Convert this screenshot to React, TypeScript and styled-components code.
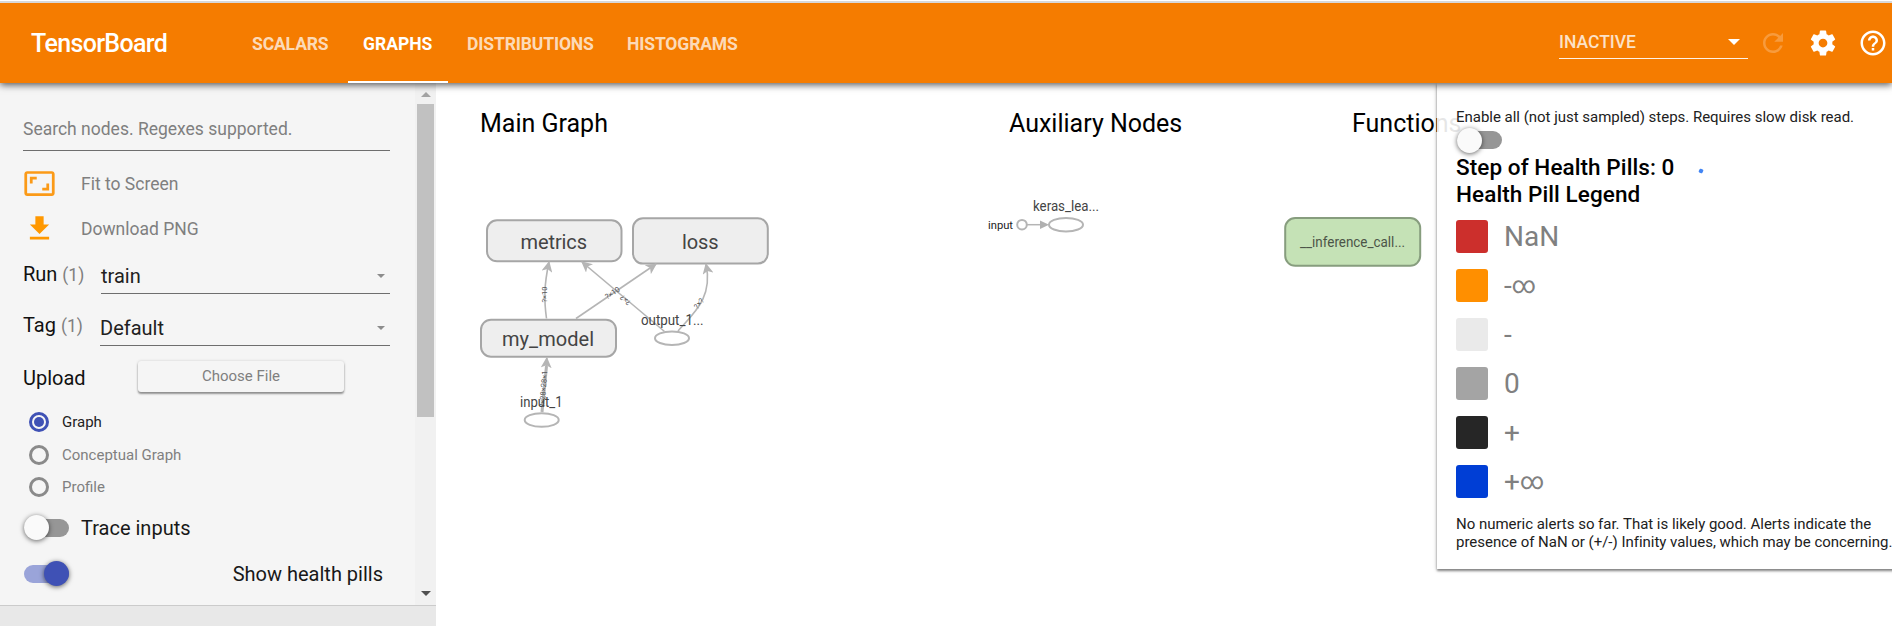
import React from "react";
import styled, { createGlobalStyle } from "styled-components";

const Global = createGlobalStyle`
  * { box-sizing: border-box; }
  body { margin: 0; background: #fff; font-family: Roboto, "Noto Sans", sans-serif; overflow: hidden; }
`;

const Page = styled.div`
  display: flex;
  flex-direction: column;
  width: 1892px;
  height: 626px;
  overflow: hidden;
`;

const Header = styled.header`
  display: flex;
  align-items: center;
  flex: none;
  height: 83px;
  padding-left: 31px;
  border-top: 3px solid #d8d8d8;
  background: #f57c00;
  color: #fff;
  position: relative;
  z-index: 3;
  box-shadow: 0 2px 7px rgba(0, 0, 0, 0.65);
  &::before {
    content: "";
    position: absolute;
    top: -3px;
    left: 0;
    right: 0;
    height: 1px;
    background: #fff;
  }
`;

const Brand = styled.div`
  width: 206px;
  padding-top: 1px;
  font-size: 25px;
  font-weight: 500;
  letter-spacing: -0.65px;
`;

const Tabs = styled.nav`
  display: flex;
  align-self: stretch;
  gap: 4px;
`;

const Tab = styled.div<{ $active?: boolean; $w: number }>`
  display: flex;
  align-items: center;
  width: ${(p) => p.$w}px;
  padding: 2px 0 0 15px;
  font-size: 17.5px;
  font-weight: 700;
  letter-spacing: ${(p) => (p.$active ? 0 : -0.12)}px;
  white-space: nowrap;
  color: ${(p) => (p.$active ? "#fff" : "rgba(255,255,255,.74)")};
  box-shadow: ${(p) => (p.$active ? "inset 0 -2px 0 #fff" : "none")};
`;

const HeaderTools = styled.div`
  display: flex;
  align-items: center;
  margin-left: auto;
  padding-right: 4px;
  gap: 20px;
`;

const Inactive = styled.div`
  display: flex;
  align-items: center;
  justify-content: space-between;
  width: 189px;
  height: 34px;
  margin: 0 -10px 2px 0;
  padding: 1px 8px 0 0;
  border-bottom: 1px solid rgba(255, 255, 255, 0.9);
  font-size: 17.5px;
  font-weight: 500;
  letter-spacing: 0;
  color: rgba(255, 255, 255, 0.78);
`;

const Main = styled.div`
  display: flex;
  flex: 1;
  min-height: 0;
`;

const Sidebar = styled.aside`
  display: flex;
  flex-direction: column;
  width: 436px;
  background: #f5f5f5;
`;

const SideBody = styled.div`
  display: flex;
  height: 522px;
`;

const Controls = styled.div`
  width: 415px;
  padding-left: 23px;
`;

const Footer = styled.div`
  flex: 1;
  border-top: 1px solid #cbcbcb;
  background: #e8e8e8;
`;

const Scrollbar = styled.div`
  display: flex;
  flex-direction: column;
  align-items: center;
  width: 21px;
  background: #f1f1f1;
`;

const Thumb = styled.div`
  width: 17px;
  height: 313px;
  margin: 7px 0 174px;
  background: #c1c1c1;
`;

const Caret = styled.i<{ $s: number; $c: string; $up?: boolean }>`
  width: 0;
  height: 0;
  flex: none;
  border: ${(p) => p.$s}px solid transparent;
  ${(p) => (p.$up ? `border-top-width: 0; border-bottom-color: ${p.$c};` : `border-bottom-width: 0; border-top-color: ${p.$c};`)}
`;

const UpCaret = styled(Caret)`
  margin-top: 9px;
`;

const Search = styled.div`
  width: 367px;
  height: 68px;
  padding-top: 35px;
  border-bottom: 1px solid #6e6e6e;
  font-size: 17.5px;
  line-height: 22px;
  color: #7f7f7f;
`;

const Action = styled.div`
  display: flex;
  align-items: center;
  height: 45px;
  font-size: 17.5px;
  color: #7f7f7f;
  svg { flex: none; margin-right: 25px; }
`;

const Actions = styled.div`
  padding-top: 10px;
`;

const Field = styled.div<{ $h: number }>`
  display: flex;
  align-items: flex-end;
  width: 367px;
  height: ${(p) => p.$h}px;
`;

const FieldName = styled.div<{ $w: number }>`
  width: ${(p) => p.$w}px;
  padding-bottom: 7px;
  font-size: 20px;
  line-height: 24px;
  color: #111;
  span { font-size: 17.5px; color: #7f7f7f; }
`;

const TagName = styled(FieldName)`
  padding-bottom: 8px;
`;

const Select = styled.div`
  display: flex;
  align-items: center;
  justify-content: space-between;
  flex: 1;
  height: 34px;
  padding: 0 5px 2px 0;
  border-bottom: 1px solid #6e6e6e;
  font-size: 20px;
  color: #212121;
`;

const Upload = styled.div`
  display: flex;
  align-items: flex-start;
  height: 60px;
  padding-top: 15px;
`;

const UploadLabel = styled.div`
  width: 115px;
  padding-top: 5px;
  font-size: 20px;
  line-height: 24px;
  color: #111;
`;

const ChooseButton = styled.div`
  width: 206px;
  height: 31px;
  border-radius: 3px;
  background: #f5f5f5;
  box-shadow: 0 2px 2px rgba(0, 0, 0, 0.38), 0 0 3px rgba(0, 0, 0, 0.16);
  font-size: 15px;
  line-height: 31px;
  text-align: center;
  color: #7f7f7f;
`;

const RadioRow = styled.div<{ $on?: boolean }>`
  display: flex;
  align-items: center;
  height: 32.5px;
  padding-left: 6px;
  gap: 13px;
  font-size: 15px;
  color: ${(p) => (p.$on ? "#222" : "#808080")};
`;

const Ring = styled.div<{ $on?: boolean }>`
  display: flex;
  align-items: center;
  justify-content: center;
  width: 20px;
  height: 20px;
  border: 3px solid ${(p) => (p.$on ? "#3f51b5" : "#8a8a8a")};
  border-radius: 50%;
  &::after {
    content: "";
    width: 10px;
    height: 10px;
    border-radius: 50%;
    background: ${(p) => (p.$on ? "#3f51b5" : "transparent")};
  }
`;

const ToggleRow = styled.div`
  display: flex;
  align-items: center;
  height: 46px;
  padding-right: 32px;
  gap: 12px;
  font-size: 20px;
  color: #181818;
`;

const ToggleRows = styled.div`
  padding: 1px 0 0 1px;
`;

const PillsLabel = styled.div`
  margin-left: auto;
`;

const Track = styled.div<{ $on?: boolean }>`
  display: flex;
  align-items: center;
  justify-content: ${(p) => (p.$on ? "flex-end" : "flex-start")};
  flex: none;
  width: 45px;
  height: 18px;
  border-radius: 9px;
  background: ${(p) => (p.$on ? "#9aa4d9" : "#969696")};
  &::after {
    content: "";
    width: 25px;
    height: 25px;
    border-radius: 50%;
    background: ${(p) => (p.$on ? "#3f51b5" : "#fafafa")};
    box-shadow: 0 1px 5px rgba(0, 0, 0, 0.6);
  }
`;

const Canvas = styled.main`
  position: relative;
  flex: 1;
  overflow: hidden;
`;

const Titles = styled.div`
  display: flex;
  padding: 25px 0 0 44px;
  font-size: 25px;
  line-height: 32px;
  color: #000;
`;

const Title = styled.div<{ $w: number }>`
  flex: none;
  width: ${(p) => p.$w}px;
`;

const Diagram = styled.svg`
  position: absolute;
  left: 0;
  top: 0;
`;

const HealthPanel = styled.section`
  position: absolute;
  left: 1001px;
  top: 0;
  width: 480px;
  height: 486px;
  padding: 25px 0 0 19px;
  background: rgba(255, 255, 255, 0.9);
  box-shadow: 0 2px 2px rgba(0, 0, 0, 0.35), 0 1px 4px rgba(0, 0, 0, 0.3);
  color: #000;
`;

const Small = styled.div`
  font-size: 15px;
  line-height: 18px;
  letter-spacing: -0.02px;
  white-space: nowrap;
  color: #212121;
`;

const PanelToggle = styled.div`
  padding: 5px 0 0 1px;
  height: 28px;
`;

const Heading = styled.div`
  display: flex;
  align-items: center;
  font-size: 22.5px;
  font-weight: 500;
  line-height: 27px;
  letter-spacing: 0.08px;
`;

const Spinner = styled.i`
  width: 4px;
  height: 4px;
  margin: 6px 0 0 25px;
  border-radius: 1px;
  background: #4285f4;
  transform: rotate(25deg);
`;

const Legend = styled.div`
  display: flex;
  flex-direction: column;
  gap: 16px;
  padding: 12px 0 17px;
`;

const LegendRow = styled.div`
  display: flex;
  align-items: center;
  height: 33px;
  gap: 16px;
  font-size: 28px;
  color: #808080;
`;

const LegendName = styled.div`
  line-height: 30px;
  span { font-size: 23.5px; line-height: 0; vertical-align: 2px; }
`;

const Swatch = styled.div<{ $c: string }>`
  width: 32px;
  height: 33px;
  border-radius: 3px;
  background: ${(p) => p.$c};
`;

const MatIcon = ({ d, size, color = "#fff" }: { d: string; size: number; color?: string }) => (
  <svg width={size} height={size} viewBox="0 0 24 24" fill={color}>
    <path d={d} />
  </svg>
);

const ICON = {
  refresh:
    "M17.65 6.35C16.2 4.9 14.21 4 12 4c-4.42 0-7.99 3.58-7.99 8s3.57 8 7.99 8c3.73 0 6.84-2.55 7.73-6h-2.08c-.82 2.33-3.04 4-5.65 4-3.31 0-6-2.69-6-6s2.69-6 6-6c1.66 0 3.14.69 4.22 1.78L13 11h7V4l-2.35 2.35z",
  settings:
    "M19.43 12.98c.04-.32.07-.64.07-.98s-.03-.66-.07-.98l2.11-1.65c.19-.15.24-.42.12-.64l-2-3.46c-.12-.22-.39-.3-.61-.22l-2.49 1c-.52-.4-1.08-.73-1.69-.98l-.38-2.65C14.46 2.18 14.25 2 14 2h-4c-.25 0-.46.18-.49.42l-.38 2.65c-.61.25-1.17.59-1.69.98l-2.49-1c-.23-.09-.49 0-.61.22l-2 3.46c-.13.22-.07.49.12.64l2.11 1.65c-.04.32-.07.65-.07.98s.03.66.07.98l-2.11 1.65c-.19.15-.24.42-.12.64l2 3.46c.12.22.39.3.61.22l2.49-1c.52.4 1.08.73 1.69.98l.38 2.65c.03.24.24.42.49.42h4c.25 0 .46-.18.49-.42l.38-2.65c.61-.25 1.17-.59 1.69-.98l2.49 1c.23.09.49 0 .61-.22l2-3.46c.12-.22.07-.49-.12-.64l-2.11-1.65zM12 15.5c-1.93 0-3.5-1.57-3.5-3.5s1.57-3.5 3.5-3.5 3.5 1.57 3.5 3.5-1.57 3.5-3.5 3.5z",
  help:
    "M11 18h2v-2h-2v2zm1-16C6.48 2 2 6.48 2 12s4.48 10 10 10 10-4.48 10-10S17.52 2 12 2zm0 18c-4.41 0-8-3.59-8-8s3.59-8 8-8 8 3.59 8 8-3.59 8-8 8zm0-14c-2.21 0-4 1.79-4 4h2c0-1.1.9-2 2-2s2 .9 2 2c0 2-3 1.75-3 5h2c0-2.25 3-2.5 3-5 0-2.21-1.79-4-4-4z",
  fit:
    "M19 12h-2v3h-3v2h5v-5zM7 9h3V7H5v5h2V9zm14-6H3c-1.1 0-2 .9-2 2v14c0 1.1.9 2 2 2h18c1.1 0 2-.9 2-2V5c0-1.1-.9-2-2-2zm0 16.01H3V4.99h18v14.02z",
  download: "M19 9h-4V3H9v6H5l7 7 7-7zM5 18v2h14v-2H5z",
};

const legend: { sign: string; infinite?: boolean; color: string }[] = [
  { sign: "NaN", color: "#cc2f2c" },
  { sign: "-", infinite: true, color: "#ff8f00" },
  { sign: "-", color: "#eaeaea" },
  { sign: "0", color: "#a4a4a4" },
  { sign: "+", color: "#262626" },
  { sign: "+", infinite: true, color: "#003ed5" },
];

const Box = ({ x, y, w, h, tx, tw, ty, label }: { x: number; y: number; w: number; h: number; tx: number; tw: number; ty: number; label: string }) => (
  <g>
    <rect x={x} y={y} width={w} height={h} rx={10} fill="#eee" stroke="#a6a6a6" strokeWidth={2} />
    <text x={tx} y={ty} textLength={tw} fontSize={20} fill="#444">{label}</text>
  </g>
);

const EdgeLabel = ({ x, y, r, children }: { x: number; y: number; r: number; children: string }) => (
  <text transform={`translate(${x} ${y}) rotate(${r})`} y={2.5} textAnchor="middle" fontSize={7.5} fill="#555">{children}</text>
);

const Graph = () => (
  <Diagram width={1456} height={543} viewBox="436 83 1456 543">
    <defs>
      <marker id="barb" viewBox="0 0 10 10" refX="9" refY="5" markerWidth="11" markerHeight="11" markerUnits="userSpaceOnUse" orient="auto">
        <path d="M0 0 10 5 0 10 2.5 5z" fill="#b5b5b5" />
      </marker>
    </defs>
    <Box x={487} y={220.3} w={134.5} h={41} tx={520.5} tw={66.5} ty={248.5} label="metrics" />
    <Box x={633} y={218.3} w={134.8} h={45.3} tx={682} tw={36.5} ty={248.5} label="loss" />
    <Box x={481} y={319.7} w={135} h={37} tx={502} tw={92} ty={345.5} label="my_model" />
    <g fill="none" stroke="#b5b5b5" strokeWidth="1.6">
      <path d="M546.5 318.5C544 300 544 285 549 262" markerEnd="url(#barb)" />
      <path d="M576 318.5 656 264" markerEnd="url(#barb)" />
      <path d="M664.5 331.5 582 262" markerEnd="url(#barb)" />
      <path d="M678 331C695 312 713 297 706 264" markerEnd="url(#barb)" />
      <path d="M542 412 546.5 366" strokeWidth="3" />
      <path d="M546 370 546.8 358" markerEnd="url(#barb)" />
    </g>
    <g fill="#fff" stroke="#b5b5b5" strokeWidth="2">
      <ellipse cx="672" cy="338.2" rx="17" ry="6.8" />
      <ellipse cx="541.7" cy="420" rx="17" ry="6.8" />
      <ellipse cx="1066" cy="224.7" rx="17" ry="6.8" />
      <circle cx="1022" cy="224.7" r="4.8" />
      <path d="M1027 224.7h14" strokeWidth="1.5" />
    </g>
    <path d="M1040 220.5 1049 224.7 1040 229z" fill="#b0b0b0" />
    <EdgeLabel x={544.5} y={294.5} r={-90}>?×10</EdgeLabel>
    <EdgeLabel x={612.5} y={293} r={-34}>?×10</EdgeLabel>
    <EdgeLabel x={625.5} y={300} r={220}>?×?</EdgeLabel>
    <EdgeLabel x={699} y={303.5} r={-52}>?×?</EdgeLabel>
    <EdgeLabel x={543.5} y={389} r={-86}>?×28×28×1</EdgeLabel>
    <g fontSize="14" fill="#444">
      <text x="641" y="325.4" textLength="62.5" lengthAdjust="spacingAndGlyphs">output_1...</text>
      <text x="520" y="407.4" textLength="42.5" lengthAdjust="spacingAndGlyphs">input_1</text>
      <text x="1033" y="211.4" textLength="66" lengthAdjust="spacingAndGlyphs">keras_lea...</text>
    </g>
    <text x="988" y="229" textLength="25" fontSize="11.2" fill="#222">input</text>
    <rect x="1285.2" y="218" width="135" height="47.8" rx="10" fill="#c5e2b6" stroke="#879d7e" strokeWidth="2" />
    <text x="1300" y="247.3" textLength="105" lengthAdjust="spacingAndGlyphs" fontSize="14" fill="#4c5548">__inference_call...</text>
  </Diagram>
);

export default function App() {
  return (
    <Page>
      <Global />
      <Header>
        <Brand>TensorBoard</Brand>
        <Tabs>
          <Tab $w={107}>SCALARS</Tab>
          <Tab $w={100} $active>GRAPHS</Tab>
          <Tab $w={156}>DISTRIBUTIONS</Tab>
          <Tab $w={141}>HISTOGRAMS</Tab>
        </Tabs>
        <HeaderTools>
          <Inactive>
            INACTIVE
            <Caret $s={6.5} $c="#fff" />
          </Inactive>
          <MatIcon d={ICON.refresh} size={30} color="rgba(255,255,255,.24)" />
          <MatIcon d={ICON.settings} size={30} />
          <MatIcon d={ICON.help} size={30} />
        </HeaderTools>
      </Header>
      <Main>
        <Sidebar>
          <SideBody>
            <Controls>
              <Search>Search nodes. Regexes supported.</Search>
              <Actions>
                <Action><MatIcon d={ICON.fit} size={33} color="#fb9a17" />Fit to Screen</Action>
                <Action><MatIcon d={ICON.download} size={33} color="#ff9800" />Download PNG</Action>
              </Actions>
              <Field $h={43}>
                <FieldName $w={78}>Run <span>(1)</span></FieldName>
                <Select>train<Caret $s={4} $c="#8c8c8c" /></Select>
              </Field>
              <Field $h={52}>
                <TagName $w={77}>Tag <span>(1)</span></TagName>
                <Select>Default<Caret $s={4} $c="#8c8c8c" /></Select>
              </Field>
              <Upload>
                <UploadLabel>Upload</UploadLabel>
                <ChooseButton>Choose File</ChooseButton>
              </Upload>
              <RadioRow $on><Ring $on />Graph</RadioRow>
              <RadioRow><Ring />Conceptual Graph</RadioRow>
              <RadioRow><Ring />Profile</RadioRow>
              <ToggleRows>
                <ToggleRow><Track />Trace inputs</ToggleRow>
                <ToggleRow><Track $on /><PillsLabel>Show health pills</PillsLabel></ToggleRow>
              </ToggleRows>
            </Controls>
            <Scrollbar>
              <UpCaret $s={5} $c="#a3a3a3" $up />
              <Thumb />
              <Caret $s={5} $c="#505050" />
            </Scrollbar>
          </SideBody>
          <Footer />
        </Sidebar>
        <Canvas>
          <Titles>
            <Title $w={529}>Main Graph</Title>
            <Title $w={343}>Auxiliary Nodes</Title>
            <Title $w={120}>Functions</Title>
          </Titles>
          <Graph />
          <HealthPanel>
            <Small>Enable all (not just sampled) steps. Requires slow disk read.</Small>
            <PanelToggle><Track /></PanelToggle>
            <Heading>Step of Health Pills: 0<Spinner /></Heading>
            <Heading>Health Pill Legend</Heading>
            <Legend>
              {legend.map(({ sign, infinite, color }) => (
                <LegendRow key={color}>
                  <Swatch $c={color} />
                  <LegendName>{sign}{infinite && <span>∞</span>}</LegendName>
                </LegendRow>
              ))}
            </Legend>
            <Small>No numeric alerts so far. That is likely good. Alerts indicate the</Small>
            <Small>presence of NaN or (+/-) Infinity values, which may be concerning.</Small>
          </HealthPanel>
        </Canvas>
      </Main>
    </Page>
  );
}
